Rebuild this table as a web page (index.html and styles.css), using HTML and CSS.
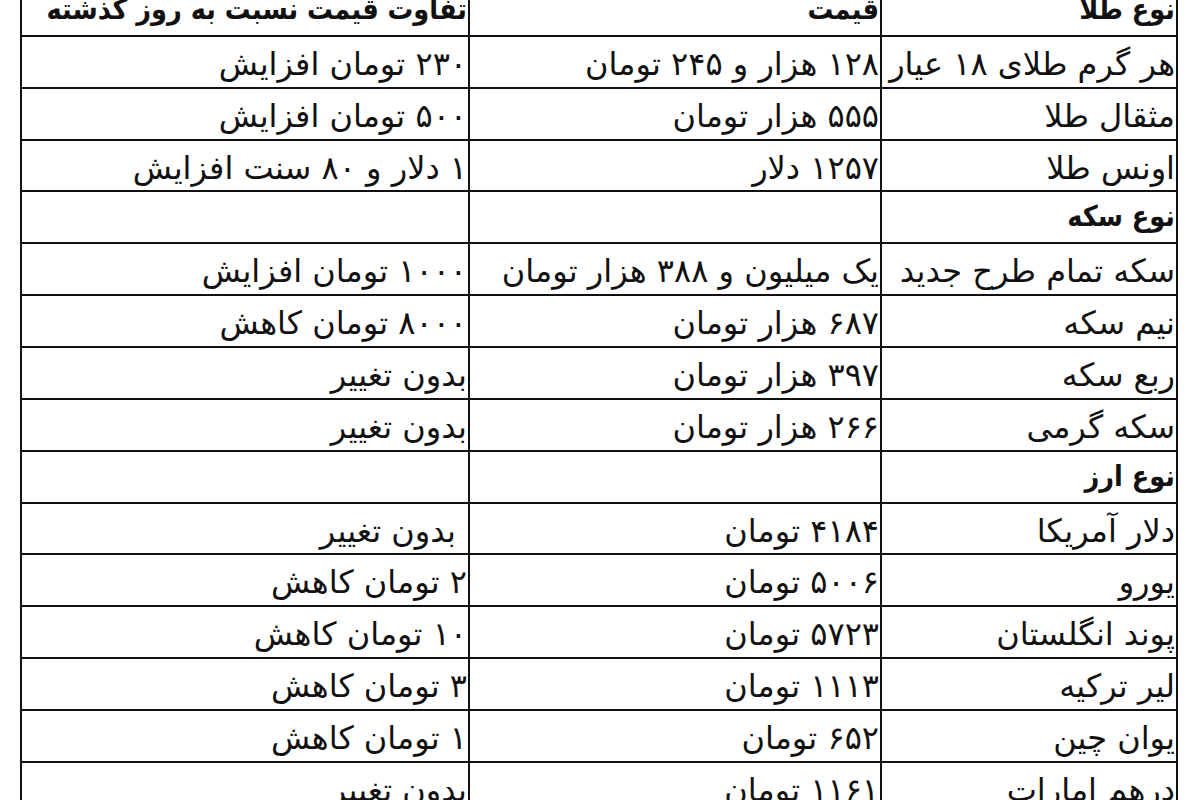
FILE: index.html
```html
<!DOCTYPE html>
<html lang="fa" dir="rtl">
<head>
<meta charset="utf-8">
<title>قیمت طلا، سکه و ارز</title>
<link rel="stylesheet" href="styles.css">
</head>
<body>
<table class="prices">
  <colgroup>
    <col class="c-type">
    <col class="c-price">
    <col class="c-diff">
  </colgroup>
  <tr class="head"><td>نوع طلا</td><td>قیمت</td><td>تفاوت قیمت نسبت به روز گذشته</td></tr>
  <tr><td>هر گرم طلای ۱۸ عیار</td><td>۱۲۸ هزار و ۲۴۵ تومان</td><td>۲۳۰ تومان افزایش</td></tr>
  <tr><td>مثقال طلا</td><td>۵۵۵ هزار تومان</td><td>۵۰۰ تومان افزایش</td></tr>
  <tr><td>اونس طلا</td><td>۱۲۵۷ دلار</td><td>۱ دلار و ۸۰ سنت افزایش</td></tr>
  <tr class="head"><td>نوع سکه</td><td></td><td></td></tr>
  <tr><td>سکه تمام طرح جدید</td><td>یک میلیون و ۳۸۸ هزار تومان</td><td>۱۰۰۰ تومان افزایش</td></tr>
  <tr><td>نیم سکه</td><td>۶۸۷ هزار تومان</td><td>۸۰۰۰ تومان کاهش</td></tr>
  <tr><td>ربع سکه</td><td>۳۹۷ هزار تومان</td><td>بدون تغییر</td></tr>
  <tr><td>سکه گرمی</td><td>۲۶۶ هزار تومان</td><td>بدون تغییر</td></tr>
  <tr class="head"><td>نوع ارز</td><td></td><td></td></tr>
  <tr><td>دلار آمریکا</td><td>۴۱۸۴ تومان</td><td class="indent">بدون تغییر</td></tr>
  <tr><td>یورو</td><td>۵۰۰۶ تومان</td><td>۲ تومان کاهش</td></tr>
  <tr><td>پوند انگلستان</td><td>۵۷۲۳ تومان</td><td>۱۰ تومان کاهش</td></tr>
  <tr><td>لیر ترکیه</td><td>۱۱۱۳ تومان</td><td>۳ تومان کاهش</td></tr>
  <tr><td>یوان چین</td><td>۶۵۲ تومان</td><td>۱ تومان کاهش</td></tr>
  <tr><td>درهم امارات</td><td>۱۱۶۱ تومان</td><td>بدون تغییر</td></tr>
</table>
</body>
</html>
```
FILE: styles.css
```css
html, body {
  margin: 0;
  padding: 0;
  background: #ffffff;
  overflow: hidden;
}
body {
  height: 800px;
  font-family: "DejaVu Sans", sans-serif;
  color: #111;
}
.prices {
  direction: rtl;
  border-collapse: collapse;
  table-layout: fixed;
  width: 1156px;
  margin: -17px 22px 0 0;
}
.c-type { width: 296px; }
.c-price { width: 412px; }
.c-diff { width: 448px; }
.prices td {
  border: 2px solid #111;
  height: 51.86px;
  padding: 4px 1px 0 0;
  box-sizing: border-box;
  text-align: right;
  vertical-align: middle;
  white-space: nowrap;
  overflow: visible;
  font-size: 32px;
  line-height: 40px;
}
.prices tr.head td {
  font-family: "DejaVu Sans Condensed", "DejaVu Sans", sans-serif;
  font-weight: bold;
  font-size: 28.5px;
  padding-top: 0;
}
.prices td.indent {
  padding-right: 12px;
}
```
